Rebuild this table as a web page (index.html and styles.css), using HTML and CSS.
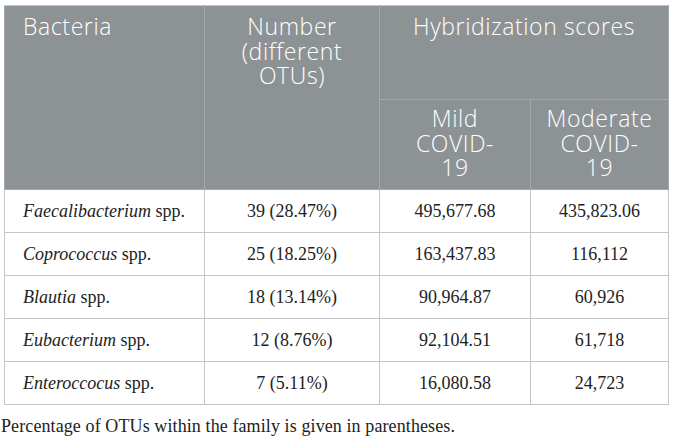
FILE: index.html
```html
<!DOCTYPE html>
<html lang="en">
<head>
    <meta charset="UTF-8">
    <title>Hybridization scores</title>
    <link rel="stylesheet" href="styles.css">
</head>
<body>
    <div class="wrap">
        <table class="scores">
            <colgroup>
                <col class="col-name">
                <col class="col-num">
                <col class="col-mild">
                <col class="col-mod">
            </colgroup>
            <thead>
                <tr>
                    <th rowspan="2" class="left">Bacteria</th>
                    <th rowspan="2">Number<br>(different<br>OTUs)</th>
                    <th colspan="2" class="group">Hybridization scores</th>
                </tr>
                <tr class="sub">
                    <th>Mild<br>COVID-<br>19</th>
                    <th>Moderate<br>COVID-<br>19</th>
                </tr>
            </thead>
            <tbody>
                <tr>
                    <td class="left"><i>Faecalibacterium</i> spp.</td>
                    <td>39 (28.47%)</td>
                    <td>495,677.68</td>
                    <td>435,823.06</td>
                </tr>
                <tr>
                    <td class="left"><i>Coprococcus</i> spp.</td>
                    <td>25 (18.25%)</td>
                    <td>163,437.83</td>
                    <td>116,112</td>
                </tr>
                <tr>
                    <td class="left"><i>Blautia</i> spp.</td>
                    <td>18 (13.14%)</td>
                    <td>90,964.87</td>
                    <td>60,926</td>
                </tr>
                <tr>
                    <td class="left"><i>Eubacterium</i> spp.</td>
                    <td>12 (8.76%)</td>
                    <td>92,104.51</td>
                    <td>61,718</td>
                </tr>
                <tr>
                    <td class="left"><i>Enteroccocus</i> spp.</td>
                    <td>7 (5.11%)</td>
                    <td>16,080.58</td>
                    <td>24,723</td>
                </tr>
            </tbody>
        </table>
        <p class="note">Percentage of OTUs within the family is given in parentheses.</p>
    </div>
</body>
</html>
```

FILE: styles.css
```css
body {
    margin: 0;
    padding: 0;
    background-color: #ffffff;
    font-family: "Liberation Serif", "Times New Roman", serif;
    color: #222222;
}

.wrap {
    padding: 5px 0 0 4px;
}

.scores {
    width: 664px;
    border-collapse: collapse;
    table-layout: fixed;
    border: 1px solid #c3c6c7;
}

.col-name { width: 200px; }
.col-num { width: 175px; }
.col-mild { width: 151px; }
.col-mod { width: 138px; }

.scores th {
    background-color: #8d9295;
    color: #ffffff;
    font-family: "Open Sans", "DejaVu Sans", sans-serif;
    font-weight: 300;
    font-size: 23px;
    line-height: 24.5px;
    letter-spacing: 0.6px;
    text-align: center;
    vertical-align: top;
    padding: 8px 4px 0;
    border: 1px solid #a4a8aa;
    border-top-color: #c3c6c7;
}

.scores thead tr:first-child th {
    height: 85px;
}

.scores tr.sub th {
    height: 83px;
    padding-top: 6px;
}

.scores th.left {
    text-align: left;
    padding-left: 18px;
}

.scores td {
    height: 42px;
    padding: 0 8px;
    font-size: 18px;
    text-align: center;
    vertical-align: middle;
    border: 1px solid #c3c6c7;
}

.scores td.left {
    text-align: left;
    padding-left: 18px;
}

.note {
    margin: 11px 0 0 -3px;
    font-size: 18px;
    letter-spacing: 0.1px;
    color: #222222;
}
```
